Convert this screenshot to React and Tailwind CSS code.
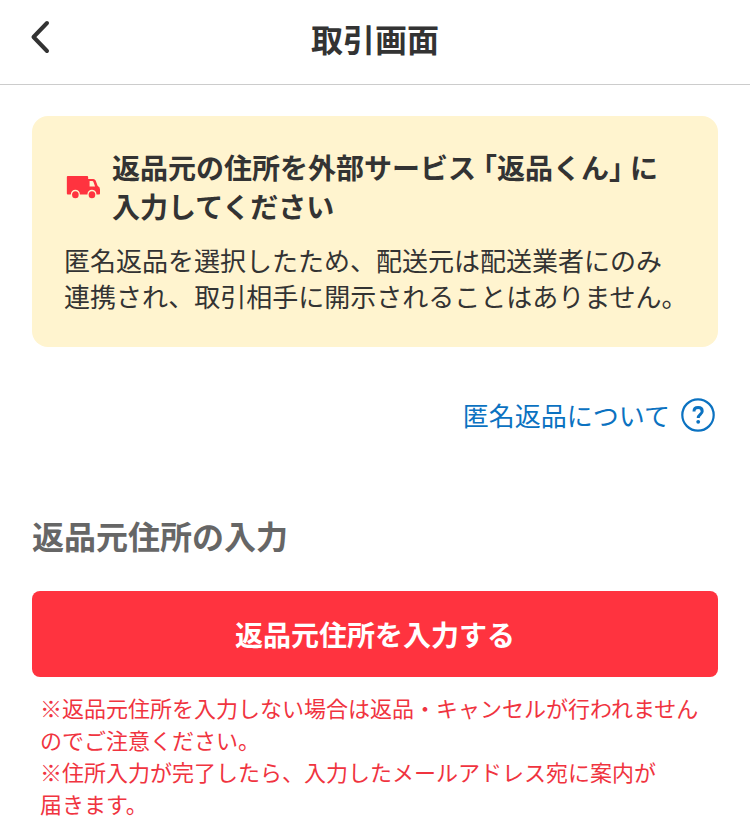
function BackIcon() {
  return (
    <svg width="24" height="36" viewBox="0 0 24 36" fill="none" stroke="currentColor" strokeWidth="4">
      <path d="M19 3 L5.5 17 L19 31" strokeLinecap="round" strokeLinejoin="round" />
    </svg>
  );
}

function TruckIcon() {
  return (
    <svg className="shrink-0" width="36" height="26" viewBox="0 0 38 26" preserveAspectRatio="none" fill="#ff333f" aria-hidden="true">
      <path
        fillRule="evenodd"
        d="M4 2H24.5a1 1 0 0 1 1 1V5H31Q32.6 5 33.4 6.5L35.6 12Q38 12.8 38 15.5V19.5a1 1 0 0 1-1 1H34.3A4.8 4.8 0 0 0 24.7 20.5H16.8A4.8 4.8 0 0 0 7.2 20.5H4a1 1 0 0 1-1-1V3a1 1 0 0 1 1-1ZM27 7V12.6H32.8L31.2 8.2Q30.8 7 29.8 7Z"
      />
      <circle cx="12" cy="20.8" r="3.5" />
      <circle cx="29.5" cy="20.8" r="3.5" />
    </svg>
  );
}

function HelpIcon() {
  return (
    <svg width="40" height="40" viewBox="0 0 40 40" fill="none" stroke="currentColor" aria-hidden="true">
      <circle cx="20" cy="20" r="15.7" strokeWidth="2.2" />
      <path d="M16 16.4C16 13.9 17.8 12.6 20.1 12.6C22.5 12.6 24.2 14 24.2 16.2C24.2 19.3 20.2 19.4 20.2 23" strokeWidth="3" />
      <circle cx="20.2" cy="26.8" r="1.9" fill="currentColor" stroke="none" />
    </svg>
  );
}

export default function App() {
  return (
    <div className="min-h-screen bg-white font-['Noto_Sans_CJK_JP',sans-serif] text-[#333333]">
      <header className="relative flex h-[85px] items-center justify-center border-b border-[#cccccc] pb-2">
        <button type="button" aria-label="戻る" className="absolute left-7 top-5">
          <BackIcon />
        </button>
        <h1 className="text-[32px] leading-12 font-bold">取引画面</h1>
      </header>

      <main className="px-8 pt-[31px] pb-4">
        <section className="rounded-2xl bg-[#fff4cf] pt-8 pr-6 pb-[33px] pl-8">
          <div className="flex items-center gap-3">
            <TruckIcon />
            <h2 className="text-[28px] leading-[39px] font-bold">
              返品元の住所を外部サービス
              <span className="ml-[7px] [font-feature-settings:'halt']">「</span>
              返品くん
              <span className="mr-[7px] [font-feature-settings:'halt']">」</span>
              に
              <br />
              入力してください
            </h2>
          </div>
          <p className="mt-4 text-[26px] leading-9">
            匿名返品を選択したため、配送元は配送業者にのみ
            <br />
            連携され、取引相手に開示されることはありません。
          </p>
        </section>

        <div className="mt-12 flex justify-end">
          <a href="#about" className="flex items-center gap-2 text-[26px] leading-10 text-[#0b72c1]">
            匿名返品について
            <HelpIcon />
          </a>
        </div>

        <h2 className="mt-19 text-[32px] leading-12 font-bold text-[#666666]">返品元住所の入力</h2>
        <button
          type="button"
          className="mt-8 h-[86px] w-full rounded-lg bg-[#ff333f] text-[28px] font-bold text-white"
        >
          返品元住所を入力する
        </button>
        <p className="mt-3.5 px-2 text-[22px] leading-8 text-[#f0343f]">
          ※返品元住所を入力しない場合は返品・キャンセルが行われません
          <br />
          のでご注意ください。
          <br />
          ※住所入力が完了したら、入力したメールアドレス宛に案内が
          <br />
          届きます。
        </p>
      </main>
    </div>
  );
}
